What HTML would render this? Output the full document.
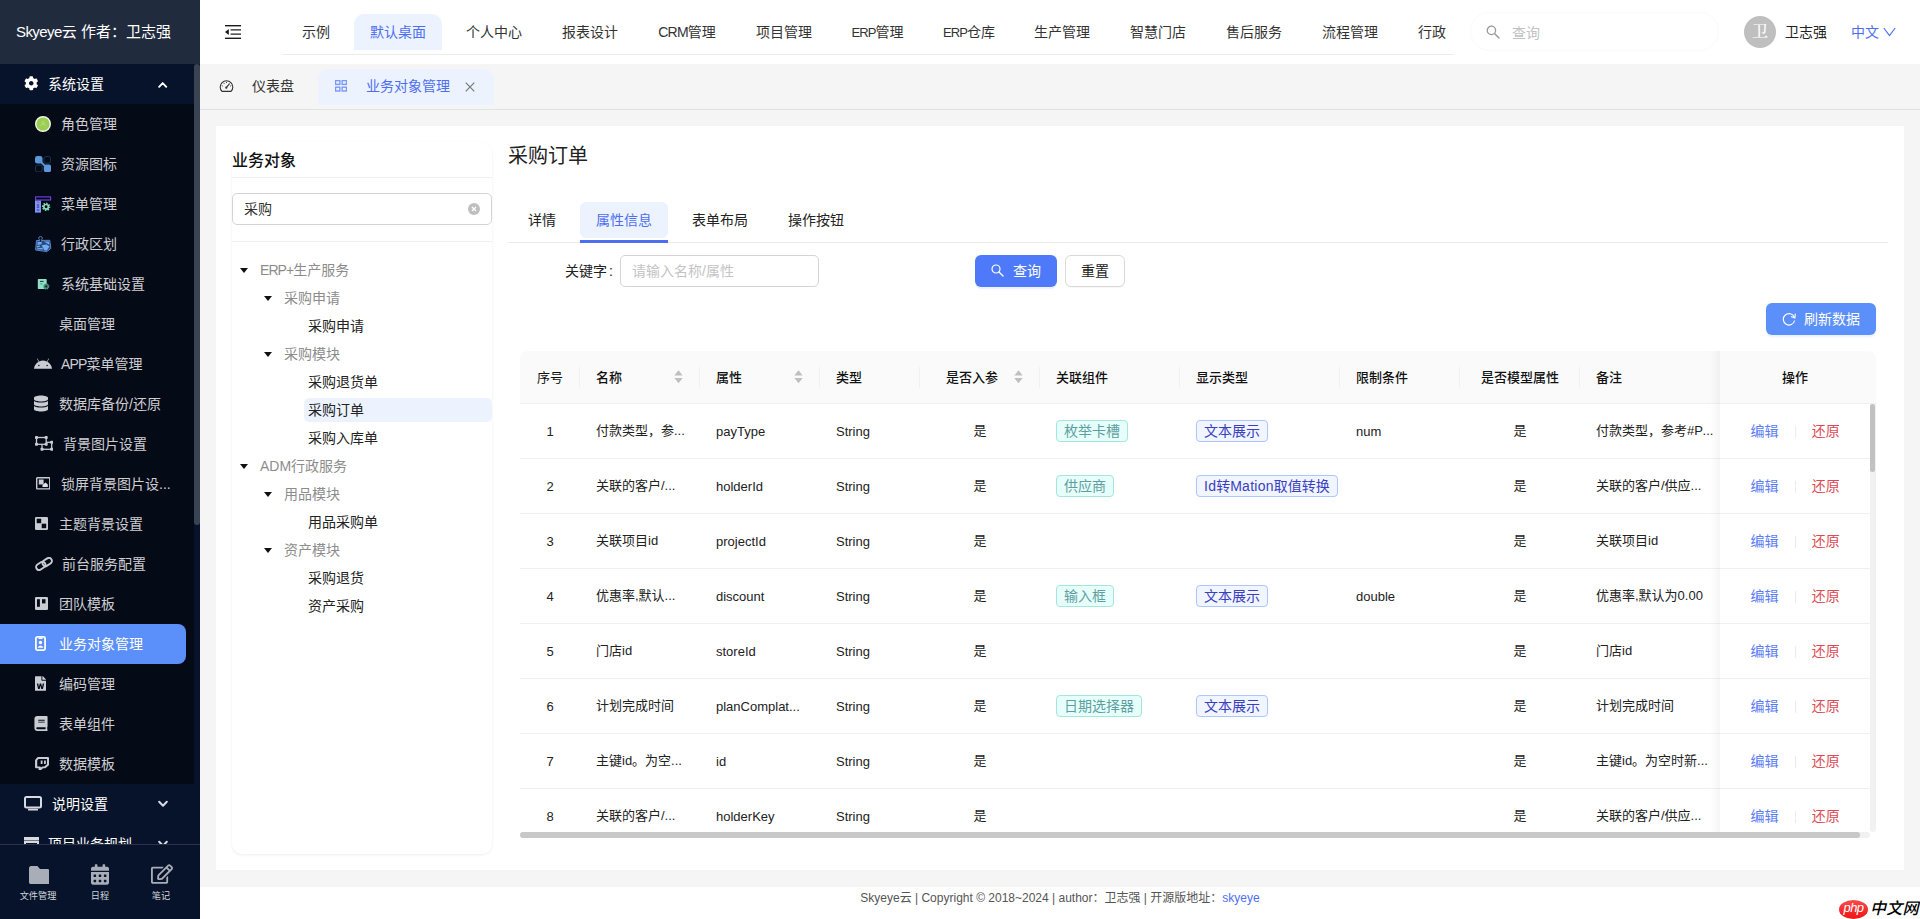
<!DOCTYPE html>
<html lang="zh-CN">
<head>
<meta charset="utf-8">
<title>Skyeye云</title>
<style>
*{box-sizing:border-box;margin:0;padding:0}
html,body{width:1920px;height:919px;overflow:hidden;background:#f5f5f5}
body{font-family:"Liberation Sans","Noto Sans CJK SC",sans-serif;font-size:14px;color:#222;position:relative}
.abs{position:absolute}
svg{display:block}
/* ---------- sidebar ---------- */
#side{position:absolute;left:0;top:0;width:200px;height:919px;background:#07132a;overflow:hidden}
#logo{position:absolute;left:0;top:0;width:200px;height:64px;background:#212b3e;color:#fff;font-size:15px;line-height:63px;padding-left:16px;white-space:nowrap}
#sub{position:absolute;left:0;top:104px;width:194px;height:680px;background:#050a17}
#strack{position:absolute;left:194px;top:64px;width:6px;height:781px;background:#07132a}
#sthumb{position:absolute;left:194px;top:64px;width:6px;height:461px;background:#3a4352;border-radius:3px}
.grp{position:absolute;left:0;width:194px;height:40px;color:#fff;font-size:14px;line-height:41px;white-space:nowrap}
.grp .t{position:absolute;top:0}
.grp svg{position:absolute}
.mi{position:absolute;left:0;width:194px;height:40px;color:#cdced2;font-size:14px;line-height:41px;white-space:nowrap}
.mi .t{position:absolute;top:0}
.mi svg{position:absolute}
.mi.on{width:186px;background:#5b8ff9;color:#fff;border-radius:0 8px 8px 0}
#tools{position:absolute;left:0;top:844px;width:200px;height:75px;background:#07132a;border-top:1px solid #2a3347}
#tools .tl{position:absolute;top:44.500px;width:60px;text-align:center;font-size:9.200px;color:#d0d3da;line-height:12px;white-space:nowrap}
#tools svg{position:absolute}
/* ---------- top ---------- */
#top{position:absolute;left:200px;top:0;width:1720px;height:64px;background:#fff}
.nav{position:absolute;top:14px;height:36px;line-height:37px;font-size:14px;color:#333;white-space:nowrap;text-align:center}
.nav.on{background:#ecf3ff;color:#4e6ef2;border-radius:10px 10px 0 0}
#tabs{position:absolute;left:200px;top:64px;width:1720px;height:46px;background:#f5f5f5;border-bottom:1px solid #e2e2e2}
/* ---------- content ---------- */
#card{position:absolute;left:216px;top:126px;width:1688px;height:744px;background:#fff}
#foot{position:absolute;left:200px;top:887px;width:1720px;height:32px;background:#fff;font-size:12px;color:#555;text-align:center;line-height:22px;white-space:nowrap}
.en{letter-spacing:-.6px}
#lp{position:absolute;left:232px;top:142px;width:260px;height:712px;background:#fff;border-radius:10px;box-shadow:0 1px 3px rgba(0,0,0,.07)}
.lt{font-size:16px;font-weight:500;line-height:24px;color:#111}
.hl{height:1px;background:#f0f0f0}
.inp{border:1px solid #d4d4d4;border-radius:5px;background:#fff;font-size:14px;white-space:nowrap}
.tn{font-size:14px;line-height:29px;white-space:nowrap}
.en2{letter-spacing:-.93px}
.en3{letter-spacing:-.4px}
.btn{border-radius:6px;font-size:14px;white-space:nowrap}
.th{top:365px;font-size:13px;font-weight:500;line-height:26px;color:#111;white-space:nowrap}
.tr{position:absolute;left:0;width:1350px;height:55px;border-bottom:1px solid #f0f0f0}
.td{position:absolute;top:14px;font-size:13px;line-height:26px;color:#222;white-space:nowrap}
.td.op{font-size:14px}
.tag{position:absolute;top:16px;height:22px;line-height:21px;padding:0 7px;font-size:14px;border-radius:4px;border:1px solid;white-space:nowrap}
.tag.cy{background:#e6fffb;border-color:#a3e6dc;color:#5f9ea0}
.tag.gb{background:#f0f5ff;border-color:#adc6ff;color:#3a3fc0}
.td.la{top:15px}
.en4{letter-spacing:.25px}

</style>
</head>
<body>
<div id="side">
  <div id="sub"></div>
  <div id="logo"><span style="letter-spacing:-.58px">Skyeye</span>云 作者：卫志强</div>
  <div id="strack"></div><div id="sthumb"></div>

  <div class="grp" style="top:64px">
    <svg style="left:23.700px;top:12.200px" width="14.500" height="14.500" viewBox="0 0 512 512"><path fill="#fff" d="M487.4 315.7l-42.6-24.6c4.3-23.2 4.300-47 0-70.200l42.6-24.600c4.900-2.800 7.100-8.600 5.500-14-11.100-35.600-30-67.800-54.700-94.600-3.800-4.100-10-5.100-14.800-2.300L380.800 110c-17.900-15.400-38.500-27.300-60.800-35.100V25.800c0-5.600-3.900-10.500-9.400-11.700-36.700-8.200-74.300-7.800-109.200 0-5.500 1.200-9.400 6.100-9.400 11.700V75c-22.200 7.900-42.800 19.800-60.800 35.100L88.700 85.500c-4.900-2.800-11-1.900-14.800 2.300-24.700 26.700-43.600 58.900-54.700 94.600-1.700 5.400.6 11.200 5.500 14L67.300 221c-4.300 23.200-4.300 47 0 70.200l-42.600 24.600c-4.900 2.800-7.100 8.600-5.500 14 11.100 35.600 30 67.800 54.700 94.600 3.800 4.100 10 5.100 14.800 2.300l42.600-24.600c17.900 15.400 38.500 27.300 60.800 35.100v49.200c0 5.600 3.900 10.500 9.400 11.700 36.700 8.200 74.300 7.800 109.200 0 5.500-1.200 9.400-6.100 9.400-11.700v-49.200c22.200-7.900 42.800-19.800 60.800-35.100l42.600 24.600c4.900 2.800 11 1.900 14.800-2.300 24.700-26.700 43.600-58.900 54.700-94.600 1.500-5.500-.7-11.300-5.600-14.100zM256 336c-44.100 0-80-35.900-80-80s35.900-80 80-80 80 35.900 80 80-35.900 80-80 80z"/></svg>
    <span class="t" style="left:48px">系统设置</span>
    <svg style="left:158.300px;top:17px" width="9.400" height="7.500" viewBox="0 0 10 8"><path d="M1.2 6.2 L5 2.2 L8.800 6.200" fill="none" stroke="#fff" stroke-width="2" stroke-linecap="round" stroke-linejoin="round"/></svg>
  </div>

  <!-- 角色管理 -->
  <div class="mi" style="top:104px">
    <svg style="left:35px;top:12px" width="16" height="16" viewBox="0 0 16 16"><circle cx="8" cy="8" r="7.300" fill="#9ccc54" stroke="#eef8e2" stroke-width="1.400"/><circle cx="8.200" cy="6.600" r="1.300" fill="none" stroke="#bfe08f" stroke-width=".7"/><path d="M5.800 9.800 Q6.500 7.900 8.200 7.900 Q9.700 8.200 11.400 10.200" fill="none" stroke="#bfe08f" stroke-width=".7"/></svg>
    <span class="t" style="left:61px">角色管理</span></div>
  <!-- 资源图标 -->
  <div class="mi" style="top:144px">
    <svg style="left:35px;top:11.800px" width="16.200" height="16.400" viewBox="0 0 16.200 16.400"><rect x="9" y=".6" width="6.600" height="6.600" rx="1.800" fill="none" stroke="#1c3354" stroke-width="1"/><rect x=".5" y="9.200" width="6.600" height="6.600" rx="1.800" fill="none" stroke="#1c3354" stroke-width="1"/><path d="M6 6 L10.500 10.500" stroke="#5b97d9" stroke-width="1.800"/><rect x="0" y="0" width="7.500" height="7.500" rx="2.300" fill="#5b97d9"/><rect x="8.800" y="8.600" width="7.300" height="7.600" rx="2.300" fill="#5b97d9"/></svg>
    <span class="t" style="left:61px">资源图标</span></div>
  <!-- 菜单管理 -->
  <div class="mi" style="top:184px">
    <svg style="left:35px;top:11.500px" width="17" height="17" viewBox="0 0 17 17"><rect x=".6" y=".9" width="15" height="3.100" fill="#000" stroke="#6c3fe8" stroke-width="1.200"/><rect x="0" y="4.600" width="6" height="12" fill="#8495f5"/><path d="M1.800 6.200h2.400" stroke="#6470d0" stroke-width="1.200"/><path d="M1.800 9h2.400M1.800 11.100h2.400M1.800 14h2.400" stroke="#2a2f86" stroke-width="1"/><circle cx="11.100" cy="10.800" r="3.500" fill="none" stroke="#86dcb8" stroke-width="1.500" stroke-dasharray="1.500 1.250" stroke-dashoffset=".4"/><circle cx="11.100" cy="10.800" r="2.300" fill="none" stroke="#86dcb8" stroke-width="1.700"/></svg>
    <span class="t" style="left:61px">菜单管理</span></div>
  <!-- 行政区划 -->
  <div class="mi" style="top:224px">
    <svg style="left:35px;top:12px" width="16.500" height="16.500" viewBox="0 0 16.500 16.500"><path d="M1.500 4.500 L14.800 4.300 L15.800 12.500 L11.800 15.600 L.6 14 Z" fill="#2b4a7c" stroke="#5687cc" stroke-width="1" stroke-linejoin="round"/><path d="M2.600 6 L6.800 5.800 L6.500 8.200 L2.400 9 Z" fill="#6ea8f0"/><path d="M9 5.600 L14 5.500 L14.300 8.800 Z" fill="#6ea8f0"/><path d="M2 10 L5 9.600 L4.600 11 L2 11.400Z" fill="#6ea8f0"/><path d="M2.200 12.200 L7.500 11.800 L8 13.600 L2 13.200Z" fill="#6ea8f0"/><path d="M6.600 9.200 L11.500 8.400 L14.500 10.500 L11.600 14.800 L9.200 14 Z" fill="#72aef5"/><circle cx="5.500" cy="2.300" r="1.800" fill="none" stroke="#4f7fc0" stroke-width="1"/><path d="M5.500 2 V5.500" stroke="#0a1424" stroke-width="1.100"/></svg>
    <span class="t" style="left:61px">行政区划</span></div>
  <!-- 系统基础设置 -->
  <div class="mi" style="top:264px">
    <svg style="left:37px;top:14px" width="14" height="13" viewBox="0 0 14 13"><rect x=".8" y=".9" width="8.900" height="10.100" rx=".8" fill="#8ee0c8"/><path d="M3 3.400h3.600" stroke="#173a33" stroke-width="1"/><path d="M3 5.900h2.800" stroke="#5e9c8c" stroke-width="1"/><circle cx="9.200" cy="8.400" r="2.700" fill="#3f7d70" stroke="#6fb8a4" stroke-width=".8" stroke-dasharray="1.300 .8"/><circle cx="9.200" cy="8.400" r=".9" fill="#0c1f1c"/></svg>
    <span class="t" style="left:61px">系统基础设置</span></div>
  <!-- 桌面管理 -->
  <div class="mi" style="top:304px"><span class="t" style="left:59px">桌面管理</span></div>
  <!-- APP菜单管理 -->
  <div class="mi" style="top:344px">
    <svg style="left:34px;top:14px" width="18" height="11" viewBox="0 0 576 340"><path fill="#c9ccd2" d="M420.550 215.410a24 24 0 1 1 24-24 24 24 0 0 1-24 24m-265.100 0a24 24 0 1 1 24-24 24 24 0 0 1-24 24m273.700-144.480l47.940-83a10 10 0 1 0-17.270-10l-48.540 84.070a301.250 301.250 0 0 0-246.560 0L116.180-22.070a10 10 0 1 0-17.270 10l47.940 83C64.530 115.700 8.240 199.040 0 297.500h576c-8.240-98.460-64.540-181.800-146.850-226.570" transform="translate(0,40)"/></svg>
    <span class="t" style="left:61px"><span style="letter-spacing:-.87px">APP</span>菜单管理</span></div>
  <!-- 数据库备份/还原 -->
  <div class="mi" style="top:384px">
    <svg style="left:34px;top:11px" width="14" height="17" viewBox="0 0 448 512"><path fill="#c9ccd2" d="M448 73.143v45.714C448 159.143 347.667 192 224 192S0 159.143 0 118.857V73.143C0 32.857 100.333 0 224 0s224 32.857 224 73.143zM448 176v102.857C448 319.143 347.667 352 224 352S0 319.143 0 278.857V176c48.125 33.143 136.208 48.572 224 48.572S399.874 209.143 448 176zm0 160v102.857C448 479.143 347.667 512 224 512S0 479.143 0 438.857V336c48.125 33.143 136.208 48.572 224 48.572S399.874 369.143 448 336z"/></svg>
    <span class="t" style="left:59px">数据库备份/还原</span></div>
  <!-- 背景图片设置 -->
  <div class="mi" style="top:424px">
    <svg style="left:34.800px;top:12.300px" width="18.200" height="14.800" viewBox="0 0 18.200 14.800"><g fill="none" stroke="#c9ccd2" stroke-width="1.300"><rect x="7" y="6.300" width="9.700" height="7"/></g><g fill="#c9ccd2"><rect x="15.200" y="4.800" width="3" height="3" rx=".8"/><rect x="15.200" y="11.800" width="3" height="3" rx=".8"/><rect x="5.500" y="11.800" width="3" height="3" rx=".8"/></g><rect x="1.500" y="1.500" width="9.700" height="6.800" fill="#050a17" stroke="#c9ccd2" stroke-width="1.300"/><g fill="#c9ccd2"><rect x="0" y="0" width="3" height="3" rx=".8"/><rect x="9.700" y="0" width="3" height="3" rx=".8"/><rect x="0" y="6.800" width="3" height="3" rx=".8"/><rect x="9.700" y="6.800" width="3" height="3" rx=".8"/></g></svg>
    <span class="t" style="left:63px">背景图片设置</span></div>
  <!-- 锁屏背景图片设... -->
  <div class="mi" style="top:464px">
    <svg style="left:35.700px;top:13.200px" width="14.500" height="12.600" viewBox="0 0 14.500 12.600"><rect x=".7" y=".7" width="13.100" height="11.200" rx=".6" fill="none" stroke="#c9ccd2" stroke-width="1.400"/><rect x="2.800" y="2.500" width="4.800" height="5" fill="#c9ccd2"/><path d="M6.500 10 L6.500 8 L9.500 5.500 L11.800 7.500 L11.800 10Z" fill="#e1e3e8"/></svg>
    <span class="t" style="left:61px">锁屏背景图片设...</span></div>
  <!-- 主题背景设置 -->
  <div class="mi" style="top:504px">
    <svg style="left:35px;top:13.200px" width="13" height="13" viewBox="0 0 13 13"><rect x="0" y="0" width="13" height="13" rx="1.300" fill="#c9ccd2"/><rect x="1.700" y="1.700" width="4.500" height="4.500" fill="#050a17"/><rect x="6.700" y="6.700" width="4.500" height="4.500" fill="#050a17"/></svg>
    <span class="t" style="left:59px">主题背景设置</span></div>
  <!-- 前台服务配置 -->
  <div class="mi" style="top:544px">
    <svg style="left:35px;top:12.900px" width="18" height="14" viewBox="0 0 18 14"><g fill="none" stroke="#c9ccd2" stroke-width="1.900"><rect x="-5" y="-3" width="10" height="6" rx="3" transform="translate(5.800,8.900) rotate(-33)"/><rect x="-5" y="-3" width="10" height="6" rx="3" transform="translate(12.200,5) rotate(-33)"/></g></svg>
    <span class="t" style="left:62px">前台服务配置</span></div>
  <!-- 团队模板 -->
  <div class="mi" style="top:584px">
    <svg style="left:35px;top:13.200px" width="13" height="13" viewBox="0 0 13 13"><rect x="0" y="0" width="13" height="13" rx="1.300" fill="#c9ccd2"/><rect x="2" y="2.200" width="2.900" height="7.600" fill="#050a17"/><rect x="7" y="2.200" width="3.500" height="4.200" fill="#050a17"/></svg>
    <span class="t" style="left:59px">团队模板</span></div>
  <!-- 业务对象管理 -->
  <div class="mi on" style="top:624px">
    <svg style="left:35px;top:12px" width="11" height="15" viewBox="0 0 11 15"><rect x=".9" y=".9" width="9.200" height="13.200" rx="1.500" fill="none" stroke="#fff" stroke-width="1.800"/><rect x="3.500" y="1.500" width="4" height="1.500" fill="#fff"/><circle cx="5.500" cy="6.500" r="1.700" fill="#fff"/><path d="M2.500 11.800 Q5.500 7 8.500 11.800Z" fill="#fff"/></svg>
    <span class="t" style="left:59px">业务对象管理</span></div>
  <!-- 编码管理 -->
  <div class="mi" style="top:664px">
    <svg style="left:35px;top:12px" width="11" height="15" viewBox="0 0 384 512"><path fill="#c9ccd2" d="M224 136V0H24C10.700 0 0 10.700 0 24v464c0 13.300 10.700 24 24 24h336c13.300 0 24-10.700 24-24V160H248c-13.200 0-24-10.800-24-24zm57.100 120H305c7.700 0 13.400 7.100 11.700 14.700l-38 168c-1.200 5.500-6.100 9.300-11.700 9.300h-38c-5.500 0-10.300-3.800-11.600-9.100-25.800-103.500-20.800-81.200-25.600-110.500h-.5c-1.100 14.300-2.400 17.400-25.600 110.500-1.300 5.300-6.100 9.100-11.600 9.100H117c-5.600 0-10.500-3.900-11.700-9.400l-37.800-168c-1.700-7.500 4-14.600 11.700-14.600h24.500c5.700 0 10.700 4 11.800 9.700 15.600 78 20.100 109.500 21 122.200 1.600-10.200 7.300-32.700 29.400-122.700 1.300-5.400 6.100-9.100 11.700-9.100h29.100c5.600 0 10.400 3.800 11.700 9.200 24 100.400 28.800 124 29.600 129.400-.2-11.200-2.600-17.800 21.600-129.200 1-5.600 5.900-9.500 11.500-9.500zM384 121.900v6.100H256V0h6.100c6.400 0 12.500 2.500 17 7l97.900 98c4.500 4.500 7 10.600 7 16.900z"/></svg>
    <span class="t" style="left:59px">编码管理</span></div>
  <!-- 表单组件 -->
  <div class="mi" style="top:704px">
    <svg style="left:34px;top:12px" width="14" height="15" viewBox="0 0 448 512"><path fill="#c9ccd2" d="M448 360V24c0-13.300-10.700-24-24-24H96C43 0 0 43 0 96v320c0 53 43 96 96 96h328c13.300 0 24-10.700 24-24v-16c0-7.500-3.500-14.300-8.900-18.700-4.200-15.400-4.200-59.300 0-74.700 5.400-4.300 8.900-11.100 8.900-18.600zM128 134c0-3.300 2.700-6 6-6h212c3.300 0 6 2.700 6 6v20c0 3.300-2.700 6-6 6H134c-3.300 0-6-2.700-6-6v-20zm0 64c0-3.300 2.700-6 6-6h212c3.300 0 6 2.700 6 6v20c0 3.300-2.700 6-6 6H134c-3.300 0-6-2.700-6-6v-20zm253.400 250H96c-17.700 0-32-14.300-32-32 0-17.600 14.400-32 32-32h285.400c-1.900 17.100-1.900 46.900 0 64z"/></svg>
    <span class="t" style="left:59px">表单组件</span></div>
  <!-- 数据模板 -->
  <div class="mi" style="top:744px">
    <svg style="left:34.600px;top:12.500px" width="14.200" height="13.600" viewBox="0 0 15 16" preserveAspectRatio="none"><path d="M3.200 1.200 H13.800 V8.800 L10.500 12.200 H8 L5 15.200 V12.200 H1.200 V3.800 Z" fill="none" stroke="#c9ccd2" stroke-width="2.300" stroke-linejoin="round"/><path d="M7 4v4.200M10.500 4v4.200" stroke="#c9ccd2" stroke-width="1.900"/></svg>
    <span class="t" style="left:59px">数据模板</span></div>

  <div class="grp" style="top:784px">
    <svg style="left:24px;top:12px" width="18" height="15" viewBox="0 0 18 15"><rect x="1" y="1" width="16" height="10.500" rx="1.500" fill="none" stroke="#d7dae0" stroke-width="2"/><rect x="4" y="12.800" width="10" height="1.800" rx=".5" fill="#d7dae0"/></svg>
    <span class="t" style="left:52px">说明设置</span>
    <svg style="left:158px;top:16px" width="10" height="8" viewBox="0 0 10 8"><path d="M1.200 1.800 L5 5.800 L8.800 1.800" fill="none" stroke="#d7dae0" stroke-width="2" stroke-linecap="round" stroke-linejoin="round"/></svg>
  </div>
  <div class="grp" style="top:824px">
    <svg style="left:24px;top:13px" width="15" height="14" viewBox="0 0 15 14"><rect x="0" y="0" width="15" height="3.500" fill="#d7dae0"/><rect x="1" y="5" width="13" height="9" fill="none" stroke="#d7dae0" stroke-width="2"/></svg>
    <span class="t" style="left:48px">项目业务规划</span>
    <svg style="left:158px;top:16px" width="10" height="8" viewBox="0 0 10 8"><path d="M1.200 1.800 L5 5.800 L8.800 1.800" fill="none" stroke="#d7dae0" stroke-width="2" stroke-linecap="round" stroke-linejoin="round"/></svg>
  </div>

  <div id="tools">
    <svg style="left:28.500px;top:20.600px" width="20.700" height="18.400" viewBox="0 38 512 384" preserveAspectRatio="none"><path fill="#a9adb8" d="M464 102H272l-64-64H48C21.490 38 0 59.490 0 86v288c0 26.510 21.490 48 48 48h416c26.510 0 48-21.490 48-48V150c0-26.510-21.490-48-48-48z" /></svg>
    <div class="tl" style="left:8px">文件管理</div>
    <svg style="left:91px;top:19px" width="18" height="21" viewBox="0 0 448 512"><path fill="#a9adb8" d="M0 464c0 26.500 21.500 48 48 48h352c26.500 0 48-21.500 48-48V192H0v272zm320-196c0-6.600 5.400-12 12-12h40c6.600 0 12 5.400 12 12v40c0 6.600-5.400 12-12 12h-40c-6.600 0-12-5.400-12-12v-40zm0 128c0-6.600 5.400-12 12-12h40c6.600 0 12 5.400 12 12v40c0 6.600-5.400 12-12 12h-40c-6.600 0-12-5.400-12-12v-40zM192 268c0-6.600 5.400-12 12-12h40c6.600 0 12 5.400 12 12v40c0 6.600-5.400 12-12 12h-40c-6.600 0-12-5.400-12-12v-40zm0 128c0-6.600 5.400-12 12-12h40c6.600 0 12 5.400 12 12v40c0 6.600-5.400 12-12 12h-40c-6.600 0-12-5.400-12-12v-40zM64 268c0-6.600 5.400-12 12-12h40c6.600 0 12 5.400 12 12v40c0 6.600-5.400 12-12 12H76c-6.600 0-12-5.400-12-12v-40zm0 128c0-6.600 5.400-12 12-12h40c6.600 0 12 5.400 12 12v40c0 6.600-5.400 12-12 12H76c-6.600 0-12-5.400-12-12v-40zM400 64h-48V16c0-8.800-7.200-16-16-16h-32c-8.800 0-16 7.200-16 16v48H160V16c0-8.800-7.200-16-16-16h-32c-8.800 0-16 7.200-16 16v48H48C21.500 64 0 85.500 0 112v48h448v-48c0-26.500-21.500-48-48-48z"/></svg>
    <div class="tl" style="left:70px">日程</div>
    <svg style="left:151px;top:19px" width="22" height="20" viewBox="0 0 576 512"><path fill="#a9adb8" d="M402.300 344.900l32-32c5-5 13.700-1.500 13.700 5.700V464c0 26.500-21.500 48-48 48H48c-26.500 0-48-21.500-48-48V112c0-26.500 21.500-48 48-48h273.500c7.100 0 10.700 8.600 5.700 13.700l-32 32c-1.500 1.500-3.500 2.300-5.700 2.300H48v352h352V350.500c0-2.100.8-4.100 2.300-5.600zm156.600-201.800L296.300 405.700l-90.400 10c-26.200 2.900-48.500-19.200-45.600-45.600l10-90.400L432.900 17.100c22.900-22.900 59.900-22.900 82.700 0l43.200 43.200c22.900 22.900 22.900 60 .1 82.800zM460.100 174L402 115.900 216.200 301.800l-7.300 65.300 65.300-7.300L460.100 174zm64.800-79.700l-43.200-43.200c-4.100-4.100-10.800-4.100-14.800 0L436 82l58.100 58.100 30.900-30.900c4-4.200 4-10.800-.1-14.900z"/></svg>
    <div class="tl" style="left:131px">笔记</div>
  </div>
</div>

<div id="top">
  <svg class="abs" style="left:25px;top:25px" width="16" height="14" viewBox="0 0 16 14"><g fill="#1a1a1a"><rect x="0" y="0" width="16" height="1.400"/><rect x="5.600" y="4.100" width="10.400" height="1.500" fill="#444"/><rect x="5.600" y="8.400" width="10.400" height="1.500" fill="#444"/><rect x="0" y="12.600" width="16" height="1.400"/><path d="M0 7 L3.800 4 L3.800 10Z"/></g></svg>
  <div class="abs" style="left:82px;top:54px;width:1172px;height:1px;background:#ececec"></div>
  <div class="nav" style="left:86px;width:60px">示例</div>
  <div class="nav on" style="left:154px;width:88px">默认桌面</div>
  <div class="nav" style="left:250px;width:88px">个人中心</div>
  <div class="nav" style="left:346px;width:88px">报表设计</div>
  <div class="nav" style="left:442px;width:90px"><span style="letter-spacing:-.77px">CRM</span>管理</div>
  <div class="nav" style="left:540px;width:88px">项目管理</div>
  <div class="nav" style="left:636px;width:83px"><span style="font-size:13px;letter-spacing:-.95px">ERP</span>管理</div>
  <div class="nav" style="left:727px;width:84px"><span style="font-size:13px;letter-spacing:-.95px">ERP</span>仓库</div>
  <div class="nav" style="left:818px;width:88px">生产管理</div>
  <div class="nav" style="left:914px;width:88px">智慧门店</div>
  <div class="nav" style="left:1010px;width:88px">售后服务</div>
  <div class="nav" style="left:1106px;width:88px">流程管理</div>
  <div class="nav" style="left:1202px;width:60px">行政</div>
  <div class="abs" style="left:1270px;top:12px;width:249px;height:39px;border:1px solid #fafafa;border-radius:20px"></div>
  <svg class="abs" style="left:1286px;top:25px" width="14" height="14" viewBox="0 0 14 14"><circle cx="5.400" cy="5.400" r="4.200" fill="none" stroke="#999" stroke-width="1.300"/><path d="M8.500 8.500 L13 13" stroke="#999" stroke-width="1.500" stroke-linecap="round"/></svg>
  <div class="abs" style="left:1312px;top:14px;line-height:38px;font-size:14px;color:#c2c2c2">查询</div>
  <div class="abs" style="left:1544px;top:16px;width:32px;height:32px;border-radius:16px;background:#bfbfbf;color:#fff;font-family:'Liberation Serif','Noto Serif CJK SC',serif;font-size:16px;font-weight:500;line-height:31px;text-align:center">卫</div>
  <div class="abs" style="left:1585px;top:14px;line-height:37px;font-size:14px;color:#222">卫志强</div>
  <div class="abs" style="left:1651px;top:14px;line-height:37px;font-size:14px;color:#4e6ef2">中文</div>
  <svg class="abs" style="left:1683px;top:27px" width="13" height="10" viewBox="0 0 13 10"><path d="M.8 1 L6.500 8.500 L12.200 1" fill="none" stroke="#4e6ef2" stroke-width="1.200"/></svg>
</div>
<div id="tabs">
  <svg class="abs" style="left:19.350px;top:15.850px" width="15" height="15" viewBox="0 0 15 15"><path d="M2.990 11.400 A6.300 6.300 0 1 1 12.010 11.400 Z" fill="none" stroke="#333" stroke-width="1.100" stroke-linejoin="round"/><path d="M7.300 7.600 L10.400 3.900" stroke="#333" stroke-width="1.100" stroke-linecap="round"/><circle cx="7.300" cy="7.700" r="1.100" fill="#333"/><path d="M2.700 5.600l1.100 .5M4.700 2.900l.7 1M12.300 5.600l-1.100 .5M7.500 1.900v1.100" stroke="#333" stroke-width=".9"/></svg>
  <div class="abs" style="left:52px;top:5px;line-height:35px;font-size:14px;color:#333">仪表盘</div>
  <div class="abs" style="left:118px;top:5px;width:176px;height:36px;background:#ecf3ff;border-radius:10px 10px 0 0"></div>
  <svg class="abs" style="left:135px;top:16px" width="12.200" height="12" viewBox="0 0 13 12" preserveAspectRatio="none"><g fill="none" stroke="#7b97f8" stroke-width="1.400"><rect x=".6" y=".6" width="4.600" height="3.800"/><rect x="7.600" y=".6" width="4.600" height="3.800"/><rect x=".6" y="7.200" width="4.600" height="3.800"/><rect x="7.600" y="7.200" width="4.600" height="3.800"/></g></svg>
  <div class="abs" style="left:166px;top:5px;line-height:35px;font-size:14px;color:#4e6ef2">业务对象管理</div>
  <svg class="abs" style="left:265px;top:18px" width="10" height="10" viewBox="0 0 10 10"><path d="M.7.7 L9.300 9.300 M9.300.7 L.7 9.300" stroke="#777" stroke-width="1.200"/></svg>
</div>

<div id="card"></div>
<div id="lp"></div>
<div class="abs lt" style="left:232px;top:149px">业务对象</div>
<div class="abs hl" style="left:232px;top:177px;width:260px"></div>
<div class="abs inp" style="left:232px;top:193px;width:260px;height:32px"><span style="position:absolute;left:11px;top:0;line-height:30px;color:#333">采购</span><svg class="abs" style="left:235px;top:9px" width="12" height="12" viewBox="0 0 12 12"><circle cx="6" cy="6" r="6" fill="#bfbfbf"/><path d="M4 4l4 4M8 4l-4 4" stroke="#fff" stroke-width="1.200"/></svg></div>
<div class="abs hl" style="left:232px;top:241px;width:260px"></div>
<svg class="abs" style="left:240px;top:268px" width="8" height="5" viewBox="0 0 8 5"><path d="M0 0H8L4 5Z" fill="#111"/></svg>
<div class="abs tn" style="left:260px;top:256px;color:#8c8c8c"><span class="en2">ERP+</span>生产服务</div>
<svg class="abs" style="left:264px;top:296px" width="8" height="5" viewBox="0 0 8 5"><path d="M0 0H8L4 5Z" fill="#111"/></svg>
<div class="abs tn" style="left:284px;top:284px;color:#8c8c8c">采购申请</div>
<div class="abs tn" style="left:308px;top:312px;color:#222">采购申请</div>
<svg class="abs" style="left:264px;top:352px" width="8" height="5" viewBox="0 0 8 5"><path d="M0 0H8L4 5Z" fill="#111"/></svg>
<div class="abs tn" style="left:284px;top:340px;color:#8c8c8c">采购模块</div>
<div class="abs tn" style="left:308px;top:368px;color:#222">采购退货单</div>
<div class="abs" style="left:304px;top:398px;width:188px;height:24px;background:#ecf3ff;border-radius:5px"></div>
<div class="abs tn" style="left:308px;top:396px;color:#222">采购订单</div>
<div class="abs tn" style="left:308px;top:424px;color:#222">采购入库单</div>
<svg class="abs" style="left:240px;top:464px" width="8" height="5" viewBox="0 0 8 5"><path d="M0 0H8L4 5Z" fill="#111"/></svg>
<div class="abs tn" style="left:260px;top:452px;color:#8c8c8c">ADM行政服务</div>
<svg class="abs" style="left:264px;top:492px" width="8" height="5" viewBox="0 0 8 5"><path d="M0 0H8L4 5Z" fill="#111"/></svg>
<div class="abs tn" style="left:284px;top:480px;color:#8c8c8c">用品模块</div>
<div class="abs tn" style="left:308px;top:508px;color:#222">用品采购单</div>
<svg class="abs" style="left:264px;top:548px" width="8" height="5" viewBox="0 0 8 5"><path d="M0 0H8L4 5Z" fill="#111"/></svg>
<div class="abs tn" style="left:284px;top:536px;color:#8c8c8c">资产模块</div>
<div class="abs tn" style="left:308px;top:564px;color:#222">采购退货</div>
<div class="abs tn" style="left:308px;top:592px;color:#222">资产采购</div>
<div class="abs" style="left:508px;top:141px;font-size:20px;line-height:30px;color:#222">采购订单</div>
<div class="abs hl" style="left:508px;top:242px;width:1380px;background:#ebebeb"></div>
<div class="abs" style="left:580px;top:202px;width:88px;height:36px;background:#ecf3ff;border-radius:6px"></div>
<div class="abs" style="left:580px;top:240px;width:88px;height:3px;background:#4e6ef2"></div>
<div class="abs" style="left:528px;top:202px;line-height:37px;font-size:14px;color:#222">详情</div>
<div class="abs" style="left:596px;top:202px;line-height:37px;font-size:14px;color:#4e6ef2">属性信息</div>
<div class="abs" style="left:692px;top:202px;line-height:37px;font-size:14px;color:#222">表单布局</div>
<div class="abs" style="left:788px;top:202px;line-height:37px;font-size:14px;color:#222">操作按钮</div>
<div class="abs" style="left:540px;top:255px;width:73px;text-align:right;line-height:33px;font-size:14px;color:#222;white-space:nowrap">关键字<span style="margin-left:2px">:</span></div>
<div class="abs inp" style="left:620px;top:255px;width:199px;height:32px"><span style="position:absolute;left:11px;top:0;line-height:30px;color:#c4c4c4">请输入名称/属性</span></div>
<div class="abs btn" style="left:975px;top:255px;width:82px;height:32px;background:#4e7af9;color:#fff;box-shadow:0 2px 1px rgba(78,122,249,.1)"><svg class="abs" style="left:16.200px;top:9.300px" width="13" height="13" viewBox="0 0 14 14"><circle cx="5.400" cy="5.400" r="4.300" fill="none" stroke="#fff" stroke-width="1.300"/><path d="M8.600 8.600 L13 13" stroke="#fff" stroke-width="1.400" stroke-linecap="round"/></svg><span style="position:absolute;left:38px;top:0;line-height:33px">查询</span></div>
<div class="abs btn" style="left:1065px;top:255px;width:60px;height:32px;background:#fff;border:1px solid #d9d9d9;color:#222;text-align:center;line-height:31px;box-shadow:0 1px 1px rgba(0,0,0,.03)">重置</div>
<div class="abs btn" style="left:1766px;top:303px;width:110px;height:32px;background:#5b8ff9;color:#fff;box-shadow:0 2px 2px rgba(91,143,249,.12)"><svg class="abs" style="left:16px;top:9px" width="14" height="14" viewBox="0 0 14 14"><path d="M12.300 5.200 A5.700 5.700 0 1 0 12.600 8.500" fill="none" stroke="#fff" stroke-width="1.150"/><path d="M13.300 1.600 L12.900 5.900 L8.900 4.600" fill="none" stroke="#fff" stroke-width="1.100"/></svg><span style="position:absolute;left:38px;top:0;line-height:33px">刷新数据</span></div>
<div class="abs" style="left:520px;top:351px;width:1356px;height:53px;background:#fafafa;border-radius:8px 8px 0 0;border-bottom:1px solid #f0f0f0"></div>
<div class="abs th" style="left:520px;width:60px;text-align:center;font-weight:400">序号</div>
<div class="abs" style="left:579px;top:367px;width:1px;height:21px;background:#f0f0f0"></div>
<div class="abs th" style="left:596px">名称</div>
<svg class="abs" style="left:673.5px;top:370.400px" width="9" height="13.600" viewBox="0 0 9 13.600"><path d="M.3 5.500 L4.500 .3 L8.700 5.500Z M.3 8.100 L4.500 13.300 L8.700 8.100Z" fill="#bfbfbf"/></svg>
<div class="abs" style="left:699px;top:367px;width:1px;height:21px;background:#f0f0f0"></div>
<div class="abs th" style="left:716px">属性</div>
<svg class="abs" style="left:793.5px;top:370.400px" width="9" height="13.600" viewBox="0 0 9 13.600"><path d="M.3 5.500 L4.500 .3 L8.700 5.500Z M.3 8.100 L4.500 13.300 L8.700 8.100Z" fill="#bfbfbf"/></svg>
<div class="abs" style="left:819px;top:367px;width:1px;height:21px;background:#f0f0f0"></div>
<div class="abs th" style="left:836px">类型</div>
<div class="abs" style="left:919px;top:367px;width:1px;height:21px;background:#f0f0f0"></div>
<div class="abs th" style="left:936px;width:72px;text-align:center">是否入参</div>
<svg class="abs" style="left:1013.5px;top:370.400px" width="9" height="13.600" viewBox="0 0 9 13.600"><path d="M.3 5.500 L4.500 .3 L8.700 5.500Z M.3 8.100 L4.500 13.300 L8.700 8.100Z" fill="#bfbfbf"/></svg>
<div class="abs" style="left:1039px;top:367px;width:1px;height:21px;background:#f0f0f0"></div>
<div class="abs th" style="left:1056px">关联组件</div>
<div class="abs" style="left:1179px;top:367px;width:1px;height:21px;background:#f0f0f0"></div>
<div class="abs th" style="left:1196px">显示类型</div>
<div class="abs" style="left:1339px;top:367px;width:1px;height:21px;background:#f0f0f0"></div>
<div class="abs th" style="left:1356px">限制条件</div>
<div class="abs" style="left:1459px;top:367px;width:1px;height:21px;background:#f0f0f0"></div>
<div class="abs th" style="left:1460px;width:120px;text-align:center">是否模型属性</div>
<div class="abs" style="left:1579px;top:367px;width:1px;height:21px;background:#f0f0f0"></div>
<div class="abs th" style="left:1596px">备注</div>
<div class="abs" style="left:520px;top:404px;width:1350px;height:428px;overflow:hidden">
<div class="tr" style="top:0px">
<div class="td la" style="left:0;width:60px;text-align:center">1</div>
<div class="td" style="left:76px">付款类型，参...</div>
<div class="td la" style="left:196px">payType</div>
<div class="td la" style="left:316px">String</div>
<div class="td" style="left:400px;width:120px;text-align:center">是</div>
<div class="tag cy" style="left:536px">枚举卡槽</div>
<div class="tag gb" style="left:676px">文本展示</div>
<div class="td la" style="left:836px">num</div>
<div class="td" style="left:940px;width:120px;text-align:center">是</div>
<div class="td" style="left:1076px">付款类型，参考#<span class="en3">P</span>...</div>
<div class="td op" style="left:1230.500px;color:#5b7cf7">编辑</div><div class="abs" style="left:1275px;top:22px;width:1px;height:12px;background:#ececec"></div><div class="td op" style="left:1291.800px;color:#dc4a55">还原</div>
</div>
<div class="tr" style="top:55px">
<div class="td la" style="left:0;width:60px;text-align:center">2</div>
<div class="td" style="left:76px">关联的客户/...</div>
<div class="td la" style="left:196px">holderId</div>
<div class="td la" style="left:316px">String</div>
<div class="td" style="left:400px;width:120px;text-align:center">是</div>
<div class="tag cy" style="left:536px">供应商</div>
<div class="tag gb" style="left:676px"><span class="en4">Id</span>转<span class="en4">Mation</span>取值转换</div>
<div class="td" style="left:940px;width:120px;text-align:center">是</div>
<div class="td" style="left:1076px">关联的客户/供应...</div>
<div class="td op" style="left:1230.500px;color:#5b7cf7">编辑</div><div class="abs" style="left:1275px;top:22px;width:1px;height:12px;background:#ececec"></div><div class="td op" style="left:1291.800px;color:#dc4a55">还原</div>
</div>
<div class="tr" style="top:110px">
<div class="td la" style="left:0;width:60px;text-align:center">3</div>
<div class="td" style="left:76px">关联项目id</div>
<div class="td la" style="left:196px">projectId</div>
<div class="td la" style="left:316px">String</div>
<div class="td" style="left:400px;width:120px;text-align:center">是</div>
<div class="td" style="left:940px;width:120px;text-align:center">是</div>
<div class="td" style="left:1076px">关联项目id</div>
<div class="td op" style="left:1230.500px;color:#5b7cf7">编辑</div><div class="abs" style="left:1275px;top:22px;width:1px;height:12px;background:#ececec"></div><div class="td op" style="left:1291.800px;color:#dc4a55">还原</div>
</div>
<div class="tr" style="top:165px">
<div class="td la" style="left:0;width:60px;text-align:center">4</div>
<div class="td" style="left:76px">优惠率,默认...</div>
<div class="td la" style="left:196px">discount</div>
<div class="td la" style="left:316px">String</div>
<div class="td" style="left:400px;width:120px;text-align:center">是</div>
<div class="tag cy" style="left:536px">输入框</div>
<div class="tag gb" style="left:676px">文本展示</div>
<div class="td la" style="left:836px">double</div>
<div class="td" style="left:940px;width:120px;text-align:center">是</div>
<div class="td" style="left:1076px">优惠率,默认为0.00</div>
<div class="td op" style="left:1230.500px;color:#5b7cf7">编辑</div><div class="abs" style="left:1275px;top:22px;width:1px;height:12px;background:#ececec"></div><div class="td op" style="left:1291.800px;color:#dc4a55">还原</div>
</div>
<div class="tr" style="top:220px">
<div class="td la" style="left:0;width:60px;text-align:center">5</div>
<div class="td" style="left:76px">门店id</div>
<div class="td la" style="left:196px">storeId</div>
<div class="td la" style="left:316px">String</div>
<div class="td" style="left:400px;width:120px;text-align:center">是</div>
<div class="td" style="left:940px;width:120px;text-align:center">是</div>
<div class="td" style="left:1076px">门店id</div>
<div class="td op" style="left:1230.500px;color:#5b7cf7">编辑</div><div class="abs" style="left:1275px;top:22px;width:1px;height:12px;background:#ececec"></div><div class="td op" style="left:1291.800px;color:#dc4a55">还原</div>
</div>
<div class="tr" style="top:275px">
<div class="td la" style="left:0;width:60px;text-align:center">6</div>
<div class="td" style="left:76px">计划完成时间</div>
<div class="td la" style="left:196px">planComplat...</div>
<div class="td la" style="left:316px">String</div>
<div class="td" style="left:400px;width:120px;text-align:center">是</div>
<div class="tag cy" style="left:536px">日期选择器</div>
<div class="tag gb" style="left:676px">文本展示</div>
<div class="td" style="left:940px;width:120px;text-align:center">是</div>
<div class="td" style="left:1076px">计划完成时间</div>
<div class="td op" style="left:1230.500px;color:#5b7cf7">编辑</div><div class="abs" style="left:1275px;top:22px;width:1px;height:12px;background:#ececec"></div><div class="td op" style="left:1291.800px;color:#dc4a55">还原</div>
</div>
<div class="tr" style="top:330px">
<div class="td la" style="left:0;width:60px;text-align:center">7</div>
<div class="td" style="left:76px">主键id。为空...</div>
<div class="td la" style="left:196px">id</div>
<div class="td la" style="left:316px">String</div>
<div class="td" style="left:400px;width:120px;text-align:center">是</div>
<div class="td" style="left:940px;width:120px;text-align:center">是</div>
<div class="td" style="left:1076px">主键id。为空时新...</div>
<div class="td op" style="left:1230.500px;color:#5b7cf7">编辑</div><div class="abs" style="left:1275px;top:22px;width:1px;height:12px;background:#ececec"></div><div class="td op" style="left:1291.800px;color:#dc4a55">还原</div>
</div>
<div class="tr" style="top:385px">
<div class="td la" style="left:0;width:60px;text-align:center">8</div>
<div class="td" style="left:76px">关联的客户/...</div>
<div class="td la" style="left:196px">holderKey</div>
<div class="td la" style="left:316px">String</div>
<div class="td" style="left:400px;width:120px;text-align:center">是</div>
<div class="td" style="left:940px;width:120px;text-align:center">是</div>
<div class="td" style="left:1076px">关联的客户/供应...</div>
<div class="td op" style="left:1230.500px;color:#5b7cf7">编辑</div><div class="abs" style="left:1275px;top:22px;width:1px;height:12px;background:#ececec"></div><div class="td op" style="left:1291.800px;color:#dc4a55">还原</div>
</div>
</div>
<div class="abs" style="left:1710px;top:351px;width:10px;height:481px;background:linear-gradient(to right,rgba(0,0,0,0),rgba(0,0,0,.04))"></div>
<div class="abs th" style="left:1720px;width:150px;text-align:center">操作</div>
<div class="abs" style="left:1870px;top:404px;width:6px;height:428px;background:#f1f1f1;border-radius:0 0 3px 3px"></div>
<div class="abs" style="left:1870px;top:404px;width:5px;height:68px;background:#c1c1c1;border-radius:3px"></div>
<div class="abs" style="left:520px;top:832px;width:1350px;height:6px;background:#f1f1f1;border-radius:3px"></div>
<div class="abs" style="left:520px;top:832px;width:1340px;height:6px;background:#c8c8c8;border-radius:3px"></div>
<div id="foot">Skyeye云 | Copyright © 2018~2024 | author：卫志强 | 开源版地址：<span style="color:#4e6ef2">skyeye</span></div>

<div class="abs" style="left:1839px;top:900px;width:29px;height:19px;border-radius:14.500px / 9.500px;height:19px;background:linear-gradient(#f94a4a,#ee1414);overflow:hidden"></div>
<div class="abs" style="left:1839px;top:899px;width:29px;height:20px;overflow:hidden;text-align:center;color:#fff;font-style:italic;font-size:13px;line-height:17px;letter-spacing:-.6px;font-family:'Liberation Sans',sans-serif">php</div>
<div class="abs" style="left:1870px;top:898px;width:50px;height:21px;overflow:hidden;white-space:nowrap;color:#000;font-style:italic;font-weight:500;font-size:16px;line-height:21px;letter-spacing:.2px">中文网</div>

</body>
</html>
